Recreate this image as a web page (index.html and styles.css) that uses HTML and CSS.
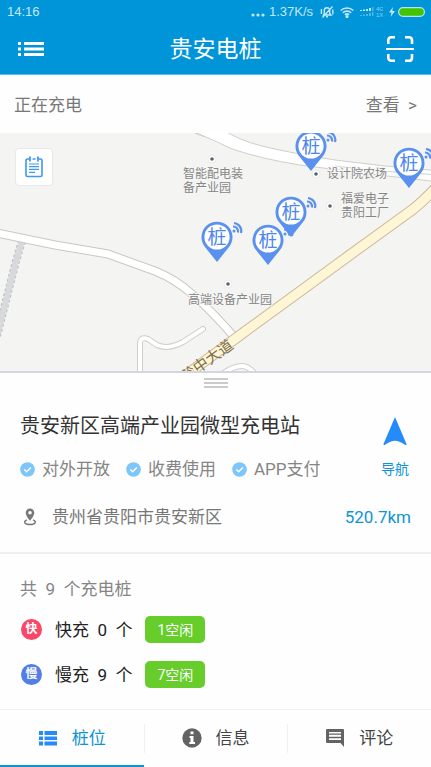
FILE: index.html
```
<!DOCTYPE html>
<html lang="zh-CN">

<head>
    <meta charset="UTF-8">
    <meta name="viewport" content="width=device-width, initial-scale=1">
    <title>贵安电桩</title>
    <link rel="stylesheet" href="styles.css">
</head>

<body>
    <header class="top">
        <div class="status">
            <span class="status__time">14:16</span>
            <svg class="status__dots" width="14" height="12" viewBox="0 0 14 12" fill="currentColor">
                <circle cx="2" cy="9" r="1.6" /><circle cx="7" cy="9" r="1.6" /><circle cx="12" cy="9" r="1.6" />
            </svg>
            <span class="status__speed">1.37K/s</span>
            <svg class="status__bell" width="14" height="12" viewBox="0 0 14 12" fill="none" stroke="currentColor" stroke-width="1.4">
                <path d="M3.5 9h7.5L9.7 7.5V4.5a2.7 2.7 0 0 0-5.4 0v3zM6 10.8h2M12.5 .5L2.5 11.500M1.4 3v5M12.800 3.500v5" />
            </svg>
            <svg class="status__wifi" width="14" height="12" viewBox="0 0 14 12" fill="none" stroke="currentColor" stroke-width="1.6">
                <path d="M.7 4.500a9 9 0 0 1 12.600 0M2.800 6.800a6 6 0 0 1 8.400 0M4.900 8.900a3 3 0 0 1 4.200 0" />
                <circle cx="7" cy="10.600" r=".8" fill="currentColor" />
            </svg>
            <svg class="status__signal" width="24" height="12" viewBox="0 0 24 12" fill="currentColor">
                <path d="M1 4h2v1H1zM4 3.5h2V5H4zM7 3h2v2H7zM10 2h2v3h-2z" />
                <path opacity=".4" d="M13 1h1.5v4H13zM1 9h2v1H1zM4 8.5h2V10H4zM7 8h2v2H7zM10 7h2v3h-2zM13 6h1.5v4H13z" />
                <text class="status__net" x="17" y="5">4G</text>
                <text class="status__net" x="17" y="11">1X</text>
            </svg>
            <svg class="status__bolt" width="6" height="10" viewBox="0 0 6 10" fill="currentColor">
                <path d="M4 0L0 5.500h2.500L1.500 10 6 4H3.300z" />
            </svg>
            <svg width="27" height="10" viewBox="0 0 27 10">
                <rect x=".6" y=".6" width="25.8" height="8.8" rx="4.4" fill="#43c400" stroke="#b4e1f5" stroke-width="1.2" />
            </svg>
        </div>
        <div class="bar">
            <button class="bar__button" title="菜单">
                <svg width="28" height="28" viewBox="0 0 28 28" fill="#fff">
                    <path d="M1 7h3v3H1zM7 7h20v3H7zM1 12.5h3v3H1zM7 12.5h20v3H7zM1 18h3v3H1zM7 18h20v3H7z" />
                </svg>
            </button>
            <h1 class="bar__title">贵安电桩</h1>
            <button class="bar__button" title="扫一扫">
                <svg width="28" height="28" viewBox="0 0 28 28" fill="none" stroke="#fff" stroke-width="2.6">
                    <path d="M2.3 9V5a3 3 0 0 1 3-2.7H9M19 2.3h4A3 3 0 0 1 26 5v4M26 19v4a3 3 0 0 1-3 2.7h-4M9 25.7H5A3 3 0 0 1 2.3 23v-4" />
                    <path stroke-width="2" d="M0 14h28" />
                </svg>
            </button>
        </div>
    </header>

    <a class="notice" href="#">
        <span>正在充电</span>
        <span class="notice__more">查看&nbsp; &gt;</span>
    </a>

    <section class="map">
        <svg class="map__canvas" viewBox="0 0 431 239" preserveAspectRatio="xMidYMid slice">
            <defs>
                <g id="pin">
                    <path d="M0 25L-12 10A15.500 15.500 0 1 1 12 10Z" fill="#5a90ee" />
                    <circle r="12.600" fill="#fff" />
                    <text class="map__pin" y="7">桩</text>
                    <g fill="none" stroke="#5a90ee" stroke-width="2.2">
                        <circle cx="17" cy="-6" r="1.5" fill="#5a90ee" stroke="none" />
                        <path d="M16 -10.500a5 5 0 0 1 5 6M17 -14a8 8 0 0 1 7 10" />
                    </g>
                </g>
                <g id="spot">
                    <circle r="4" fill="#fff" stroke="#dddddb" stroke-width=".6" />
                    <circle r="1.8" fill="#53646e" />
                </g>
            </defs>

            <!-- railway -->
            <path class="rail" d="M22 108L16 128L-3 203" />
            <path class="rail rail--inner" d="M22 108L16 128L-3 203" />
            <path d="M192 -1l6 3 6 2v-5z" fill="#cfd1d4" />

            <!-- minor roads -->
            <path class="road road--edge" d="M-3 100L55 112L108 121Q138 132 155 138Q175 146 192 161Q212 178 236 206" />
            <path class="road" d="M-3 100L55 112L108 121Q138 132 155 138Q175 146 192 161Q212 178 236 206" />
            <path class="lane lane--edge" d="M140 242V211Q140 203 148 206L157 212Q168 217 183 209L203 196" />
            <path class="lane" d="M140 242V211Q140 203 148 206L157 212Q168 217 183 209L203 196" />
            <path class="lane lane--edge" d="M218 244Q232 233 242 233Q249 233 257 243" />
            <path class="lane" d="M218 244Q232 233 242 233Q249 233 257 243" />
            <path class="outline" d="M190 -3L215 8L232 16Q262 26 300 32L370 41L440 49V38L385 33L335 27Q290 20 262 13Q238 7 224 -3Z" />
            <path class="outline" d="M335 33L380 38L440 42" />

            <!-- main road -->
            <path class="main main--edge" d="M175 250L243 200L343 127L412 77Q424 68 442 48" />
            <path class="main" d="M175 250L243 200L343 127L412 77Q424 68 442 48" />
            <text class="map__street" transform="translate(210 232) rotate(-36)">黔中大道</text>

            <use href="#spot" x="212" y="26" />
            <use href="#spot" x="316" y="41" />
            <use href="#spot" x="330" y="73" />
            <use href="#spot" x="228" y="151" />
            <text class="map__label" x="183" y="45">智能配电装</text>
            <text class="map__label" x="183" y="59">备产业园</text>
            <text class="map__label" x="327" y="45">设计院农场</text>
            <text class="map__label" x="341" y="70">福爱电子</text>
            <text class="map__label" x="341" y="84">贵阳工厂</text>
            <text class="map__label" x="188" y="171">高端设备产业园</text>

            <use href="#pin" x="311" y="13" />
            <use href="#pin" x="409" y="30" />
            <use href="#pin" x="268" y="107" />
            <use href="#pin" x="291" y="79" />
            <use href="#pin" x="217" y="104" />
        </svg>
        <button class="map__list" title="列表">
            <svg width="18" height="22" viewBox="0 0 18 22" fill="none" stroke="#3c97f5" stroke-width="1.6">
                <path d="M4 3H2.500A1.500 1.500 0 0 0 1 4.500V19a1.500 1.500 0 0 0 1.500 1.500h13A1.500 1.500 0 0 0 17 19V4.500A1.500 1.500 0 0 0 15.500 3H14M7.500 3h3" />
                <path d="M5 .5v5M13 .5v5" stroke-width="1.8" />
                <path d="M4 8h10M4 10.700h10M4 13.400h10M4 16.300h6" stroke-width="1.2" />
            </svg>
        </button>
    </section>

    <main class="sheet">
        <div class="sheet__handle"></div>

        <section class="station">
            <div class="station__info">
                <h2 class="station__name">贵安新区高端产业园微型充电站</h2>
                <ul class="tags">
                    <li class="tags__item">
                        <svg width="15" height="15" viewBox="0 0 15 15"><circle cx="7.5" cy="7.5" r="7.3" fill="#7cc6fb" /><path d="M4.3 7.5l2.3 2.3 4.3-4.3" fill="none" stroke="#fff" stroke-width="1.4" /></svg>
                        对外开放
                    </li>
                    <li class="tags__item">
                        <svg width="15" height="15" viewBox="0 0 15 15"><circle cx="7.5" cy="7.5" r="7.3" fill="#7cc6fb" /><path d="M4.3 7.5l2.3 2.3 4.3-4.3" fill="none" stroke="#fff" stroke-width="1.4" /></svg>
                        收费使用
                    </li>
                    <li class="tags__item">
                        <svg width="15" height="15" viewBox="0 0 15 15"><circle cx="7.5" cy="7.5" r="7.3" fill="#7cc6fb" /><path d="M4.3 7.5l2.3 2.3 4.3-4.3" fill="none" stroke="#fff" stroke-width="1.4" /></svg>
                        APP支付
                    </li>
                </ul>
            </div>
            <a class="station__nav" href="#">
                <svg width="24" height="28" viewBox="0 0 24 28"><path d="M12 0L23.500 27Q23.500 28.500 22 27.800Q16 24 12 23.800Q8 24 2 27.800Q.5 28.500 .5 27Z" fill="#268bfa" /></svg>
                导航
            </a>
            <div class="station__address">
                <svg width="12" height="18" viewBox="0 0 12 18">
                    <path d="M6 .5a4.300 4.300 0 0 0-4.300 4.300C1.700 8 6 12.800 6 12.800S10.300 8 10.300 4.800A4.300 4.300 0 0 0 6 .5zm0 2.500a1.800 1.800 0 1 1 0 3.600A1.800 1.800 0 0 1 6 3z" fill="#777" />
                    <path d="M3 11.800C-1 13.500 .5 16.500 6 16.500s7-3 3-4.700" fill="none" stroke="#777" stroke-width="1.4" />
                </svg>
                <span>贵州省贵阳市贵安新区</span>
                <span class="station__distance">520.7km</span>
            </div>
        </section>

        <section class="piles">
            <p class="piles__total">共  9  个充电桩</p>
            <div class="pile">
                <span class="pile__type pile__type--fast">快</span>
                <span class="pile__count">快充  0  个</span>
                <span class="pile__free">1空闲</span>
            </div>
            <div class="pile">
                <span class="pile__type">慢</span>
                <span class="pile__count">慢充  9  个</span>
                <span class="pile__free">7空闲</span>
            </div>
        </section>
    </main>

    <nav class="tabs">
        <a class="tabs__item tabs__item--active" href="#">
            <svg width="20" height="20" viewBox="0 0 20 20" fill="#268bfa">
                <path d="M1 3h4v4H1zM6.5 3H19v4H6.500zM1 8.500h4v3.500H1zM6.500 8.500H19v3.500H6.500zM1 13.500h4v4H1zM6.500 13.500H19v4H6.500z" />
            </svg>
            桩位
        </a>
        <a class="tabs__item" href="#">
            <svg width="20" height="20" viewBox="0 0 20 20">
                <circle cx="10" cy="10" r="9.7" fill="#636363" />
                <path d="M8.500 3.500h3v2.700h-3zM7.500 8h4v6H13v2H7.300v-2h1.200v-4h-1z" fill="#fff" />
            </svg>
            信息
        </a>
        <a class="tabs__item" href="#">
            <svg width="20" height="20" viewBox="0 0 20 20">
                <path d="M2 1h16a1 1 0 0 1 1 1v17l-3.500-4H2a1 1 0 0 1-1-1V2a1 1 0 0 1 1-1z" fill="#636363" />
                <path d="M4 4h12v8H4z" fill="#fff" />
                <path d="M4 6.200h12M4 9.500h12" stroke="#636363" stroke-width="1.3" />
            </svg>
            评论
        </a>
    </nav>
</body>

</html>
```
FILE: styles.css
```
html {
    box-sizing: border-box;
}

*,
*:before,
*:after {
    box-sizing: inherit;
}

body {
    margin: 0;
    display: flex;
    flex-direction: column;
    min-height: 100vh;
    font-family: Roboto, "Noto Sans CJK SC", sans-serif;
    font-size: 17px;
    line-height: 24px;
    color: #777;
    background: #fefefe;
}

h1,
h2,
p,
ul {
    margin: 0;
    padding: 0;
    font-weight: 400;
}

svg {
    display: block;
    flex: none;
}

a {
    color: inherit;
    text-decoration: none;
}

button {
    padding: 0;
    border: 0;
    background: none;
    cursor: pointer;
}

/* Header */

.top {
    background: #0095d9;
    border-bottom: 1px solid #5bbce8;
}

.status {
    display: flex;
    align-items: center;
    height: 23px;
    padding: 0 6px 0 7px;
    font-family: "Liberation Sans", Arial, sans-serif;
    font-size: 13px;
    color: #c4e7f7;
}

.status__time {
    margin-right: auto;
}

.status__speed {
    margin: 0 7px 0 4px;
}

.status__wifi {
    margin: 0 5px 0 6px;
}

.status__net {
    font-size: 6px;
    opacity: .7;
}

.status__bolt {
    margin: 0 3px 0 6px;
}

.bar {
    display: flex;
    align-items: center;
    justify-content: space-between;
    height: 51px;
    padding: 0 17px;
}

.bar__title {
    padding-top: 2px;
    font-size: 23px;
    line-height: 32px;
    color: #fff;
}

/* Charging notice */

.notice {
    display: flex;
    align-items: center;
    justify-content: space-between;
    height: 58px;
    padding: 2px 14px 0;
}

/* Map */

.map {
    position: relative;
    height: 240px;
    overflow: hidden;
    background: #f4f4f3;
    border-bottom: 2px solid #d3d5e0;
}

.map__canvas {
    width: 100%;
    height: 239px;
}

.map__list {
    position: absolute;
    top: 15px;
    left: 15px;
    display: flex;
    align-items: center;
    justify-content: center;
    width: 38px;
    height: 38px;
    background: #fff;
    border: 1px solid #e6e8ec;
    border-radius: 4px;
}

.map__label {
    font-size: 12px;
    fill: #868686;
    stroke: #f6f6f5;
    stroke-width: 2px;
    paint-order: stroke;
}

.map__street {
    font-size: 15px;
    text-anchor: middle;
    fill: #7d704d;
}

.map__pin {
    font-size: 19px;
    text-anchor: middle;
    fill: #4d86ec;
}

.rail,
.road,
.lane,
.main {
    fill: none;
    stroke: #fff;
    stroke-linecap: round;
    stroke-linejoin: round;
}

.rail {
    stroke: #bfc1c5;
    stroke-width: 8px;
    stroke-linecap: butt;
    stroke-dasharray: 3 2;
}

.rail--inner {
    stroke: #d7d9dc;
    stroke-width: 6px;
    stroke-dasharray: none;
}

.road {
    stroke-width: 7px;
}

.road--edge {
    stroke: #c9c9c0;
    stroke-width: 9px;
}

.lane {
    stroke-width: 4px;
}

.lane--edge {
    stroke: #cfcfc6;
    stroke-width: 6px;
}

.outline {
    fill: #fff;
    stroke: #cfcfc8;
    stroke-width: 1px;
}

.main {
    stroke: #fef6d4;
    stroke-width: 9px;
}

.main--edge {
    stroke: #cdb89a;
    stroke-width: 11px;
}

/* Station sheet */

.sheet {
    flex: 1;
}

.sheet__handle {
    width: 24px;
    height: 10px;
    margin: 5px auto 0;
    border-top: 2px solid #cbcbcb;
    border-bottom: 2px solid #cbcbcb;
    background: linear-gradient(#cbcbcb, #cbcbcb) center / 24px 2px no-repeat;
}

.station {
    display: grid;
    grid-template-columns: 1fr auto;
    row-gap: 24px;
    padding: 22px 20px 23px;
    border-bottom: 2px solid #f0f0f0;
}

.station__name {
    font-size: 20px;
    line-height: 32px;
    color: #333;
}

.tags {
    display: flex;
    gap: 16px;
    margin-top: 15px;
    list-style: none;
    color: #858585;
}

.tags__item {
    display: flex;
    align-items: center;
    gap: 7px;
}

.station__nav {
    display: flex;
    flex-direction: column;
    align-items: center;
    justify-content: space-between;
    padding: 7px 2px 0 0;
    font-size: 14px;
    color: #0e94d6;
}

.station__address {
    grid-column: 1 / -1;
    display: flex;
    align-items: center;
    gap: 16px;
    padding-left: 4px;
}

.station__distance {
    margin-left: auto;
    color: #0e94d6;
}

/* Charging piles */

.piles {
    display: flex;
    flex-direction: column;
    gap: 12px;
    padding: 23px 20px 18px;
}

.piles__total,
.pile__count {
    white-space: pre;
}

.piles__total {
    color: #858585;
}

.pile {
    display: flex;
    align-items: center;
    height: 33px;
}

.pile__type {
    width: 21px;
    height: 21px;
    margin-left: 1px;
    border-radius: 50%;
    font-size: 12px;
    font-weight: 700;
    line-height: 20px;
    text-align: center;
    color: #fff;
    background: #537ee6;
}

.pile__type--fast {
    background: #fa4668;
}

.pile__count {
    margin: 0 13px;
    color: #222;
}

.pile__free {
    padding: 2px 12px 1px;
    border-radius: 5px;
    font-size: 14px;
    color: #fff;
    background: #66cd2a;
}

/* Bottom tabs */

.tabs {
    display: flex;
    height: 58px;
    border-top: 1px solid #efefef;
}

.tabs__item {
    position: relative;
    flex: 1;
    display: flex;
    align-items: center;
    justify-content: center;
    gap: 14px;
    color: #444;
    border-bottom: 2px solid transparent;
}

.tabs__item--active {
    color: #0e94d6;
    border-bottom-color: #0e94d6;
}

.tabs__item + .tabs__item:before {
    content: "";
    position: absolute;
    top: 14px;
    bottom: 12px;
    left: 0;
    width: 1px;
    background: #f0f0f0;
}
```
